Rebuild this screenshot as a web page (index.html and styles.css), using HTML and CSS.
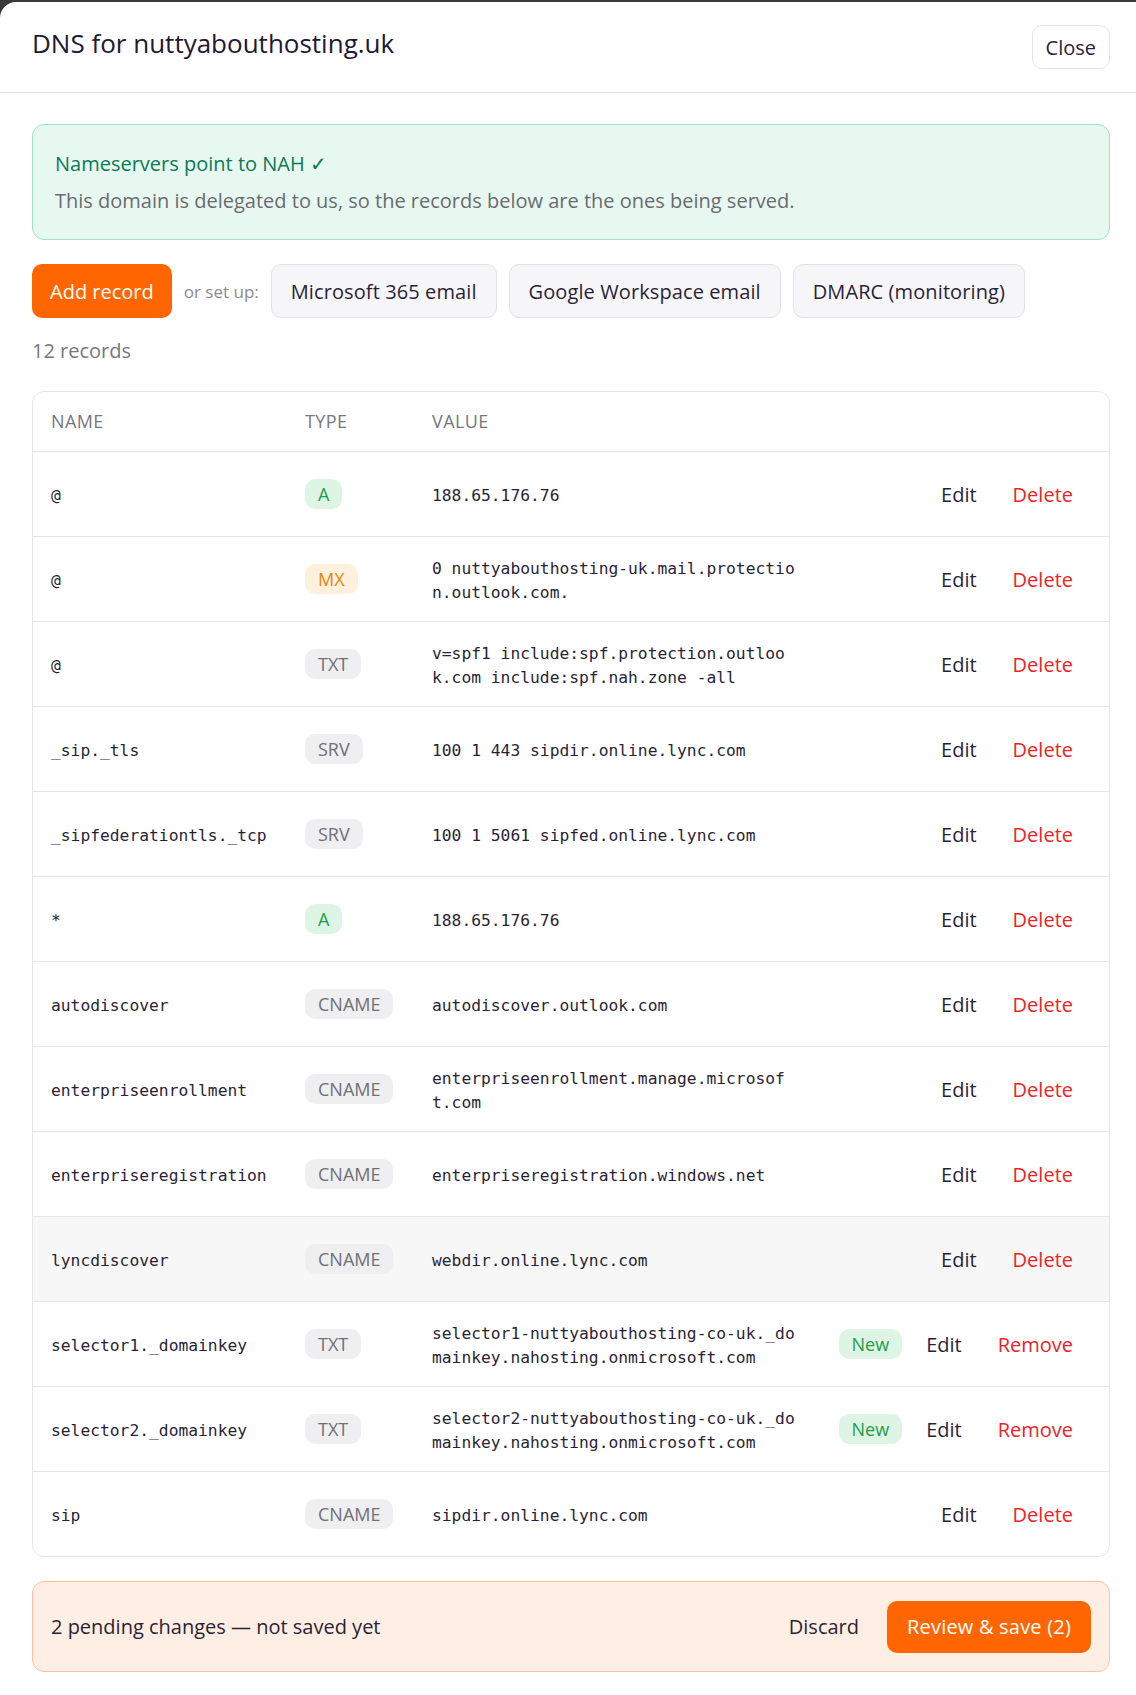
FILE: index.html
```html
<!DOCTYPE html>
<html lang="en">
<head>
  <meta charset="UTF-8">
  <meta name="viewport" content="width=device-width, initial-scale=1.0">
  <title>DNS for nuttyabouthosting.uk</title>
  <link rel="stylesheet" href="styles.css">
</head>
<body>

<div class="modal">
  <div class="modal-header">
    <h1 class="modal-title">DNS for nuttyabouthosting.uk</h1>
    <button class="btn-close">Close</button>
  </div>

  <div class="modal-body">
    <!-- Delegation status -->
    <div class="ns-banner">
      <p class="ns-title">Nameservers point to NAH ✓</p>
      <p class="ns-text">This domain is delegated to us, so the records below are the ones being served.</p>
    </div>

    <div class="toolbar">
      <button class="btn-primary">Add record</button>
      <span class="setup-label">or set up:</span>
      <button class="btn-preset">Microsoft 365 email</button>
      <button class="btn-preset">Google Workspace email</button>
      <button class="btn-preset">DMARC (monitoring)</button>
    </div>

    <p class="record-count">12 records</p>

    <!-- Records table -->
    <div class="records">
      <div class="row head">
        <span>Name</span>
        <span>Type</span>
        <span>Value</span>
        <span></span>
      </div>

      <div class="row">
        <span class="mono">@</span>
        <span><span class="badge badge-a">A</span></span>
        <span class="mono value">188.65.176.76</span>
        <span class="actions"><button class="link">Edit</button><button class="link danger">Delete</button></span>
      </div>
      <div class="row">
        <span class="mono">@</span>
        <span><span class="badge badge-mx">MX</span></span>
        <span class="mono value">0 nuttyabouthosting-uk.mail.protection.outlook.com.</span>
        <span class="actions"><button class="link">Edit</button><button class="link danger">Delete</button></span>
      </div>
      <div class="row">
        <span class="mono">@</span>
        <span><span class="badge">TXT</span></span>
        <span class="mono value">v=spf1 include:spf.protection.outlook.com include:spf.nah.zone -all</span>
        <span class="actions"><button class="link">Edit</button><button class="link danger">Delete</button></span>
      </div>
      <div class="row">
        <span class="mono">_sip._tls</span>
        <span><span class="badge">SRV</span></span>
        <span class="mono value">100 1 443 sipdir.online.lync.com</span>
        <span class="actions"><button class="link">Edit</button><button class="link danger">Delete</button></span>
      </div>
      <div class="row">
        <span class="mono">_sipfederationtls._tcp</span>
        <span><span class="badge">SRV</span></span>
        <span class="mono value">100 1 5061 sipfed.online.lync.com</span>
        <span class="actions"><button class="link">Edit</button><button class="link danger">Delete</button></span>
      </div>
      <div class="row">
        <span class="mono">*</span>
        <span><span class="badge badge-a">A</span></span>
        <span class="mono value">188.65.176.76</span>
        <span class="actions"><button class="link">Edit</button><button class="link danger">Delete</button></span>
      </div>
      <div class="row">
        <span class="mono">autodiscover</span>
        <span><span class="badge">CNAME</span></span>
        <span class="mono value">autodiscover.outlook.com</span>
        <span class="actions"><button class="link">Edit</button><button class="link danger">Delete</button></span>
      </div>
      <div class="row">
        <span class="mono">enterpriseenrollment</span>
        <span><span class="badge">CNAME</span></span>
        <span class="mono value">enterpriseenrollment.manage.microsoft.com</span>
        <span class="actions"><button class="link">Edit</button><button class="link danger">Delete</button></span>
      </div>
      <div class="row">
        <span class="mono">enterpriseregistration</span>
        <span><span class="badge">CNAME</span></span>
        <span class="mono value">enterpriseregistration.windows.net</span>
        <span class="actions"><button class="link">Edit</button><button class="link danger">Delete</button></span>
      </div>
      <div class="row hover">
        <span class="mono">lyncdiscover</span>
        <span><span class="badge">CNAME</span></span>
        <span class="mono value">webdir.online.lync.com</span>
        <span class="actions"><button class="link">Edit</button><button class="link danger">Delete</button></span>
      </div>
      <div class="row">
        <span class="mono">selector1._domainkey</span>
        <span><span class="badge">TXT</span></span>
        <span class="mono value">selector1-nuttyabouthosting-co-uk._domainkey.nahosting.onmicrosoft.com</span>
        <span class="actions"><span class="badge badge-new">New</span><button class="link">Edit</button><button class="link danger">Remove</button></span>
      </div>
      <div class="row">
        <span class="mono">selector2._domainkey</span>
        <span><span class="badge">TXT</span></span>
        <span class="mono value">selector2-nuttyabouthosting-co-uk._domainkey.nahosting.onmicrosoft.com</span>
        <span class="actions"><span class="badge badge-new">New</span><button class="link">Edit</button><button class="link danger">Remove</button></span>
      </div>
      <div class="row">
        <span class="mono">sip</span>
        <span><span class="badge">CNAME</span></span>
        <span class="mono value">sipdir.online.lync.com</span>
        <span class="actions"><button class="link">Edit</button><button class="link danger">Delete</button></span>
      </div>
    </div>

    <!-- Unsaved changes bar -->
    <div class="pending">
      <span class="pending-text">2 pending changes — not saved yet</span>
      <div class="pending-actions">
        <button class="link">Discard</button>
        <button class="btn-primary btn-save">Review &amp; save (2)</button>
      </div>
    </div>
  </div>
</div>

</body>
</html>
```

FILE: styles.css
```css
* {
  margin: 0;
  padding: 0;
  box-sizing: border-box;
}
body {
  font-family: 'Open Sans', 'Noto Sans', sans-serif;
  font-size: 20px;
  line-height: 27px;
  color: #2a1f36;
  background: #3a3a3a; /* backdrop behind the modal */
  padding-top: 2px;
}
button {
  font-family: inherit;
  font-size: inherit;
  line-height: inherit;
  color: inherit;
  border: none;
  background: none;
  cursor: pointer;
}
.modal {
  background: #ffffff;
  border-radius: 16px 0 0 0;
  min-height: 1693px;
}
/* Header */
.modal-header {
  display: flex;
  justify-content: space-between;
  align-items: center;
  height: 91px;
  padding: 0 26px 0 32px;
  border-bottom: 1px solid #e4e4e7;
}
.modal-title {
  font-size: 26px;
  line-height: 34px;
  font-weight: 500;
  color: #221833;
  margin-bottom: 8px;
}
.btn-close {
  height: 44px;
  padding: 0 13px;
  border: 1px solid #e4e4e7;
  border-radius: 10px;
  background: #ffffff;
}
.modal-body {
  padding: 31px 26px 23px 32px;
}
/* Nameserver status */
.ns-banner {
  background: #e7f8f1;
  border: 1px solid #9fe2c8;
  border-radius: 12px;
  padding: 25px 22px;
}
.ns-title {
  color: #0b7a56;
  font-weight: 500;
  margin-bottom: 10px;
}
.ns-text {
  color: #6b6b70;
}
/* Toolbar */
.toolbar {
  display: flex;
  align-items: center;
  gap: 12px;
  margin-top: 24px;
}
.btn-primary {
  height: 54px;
  padding: 0 18px;
  background: #ff6600;
  color: #ffffff;
  border-radius: 10px;
  font-weight: 500;
}
.setup-label {
  font-size: 17px;
  color: #8a8a8f;
}
.btn-preset {
  height: 54px;
  padding: 0 19px;
  background: #f6f6f8;
  border: 1px solid #e2e2e6;
  border-radius: 10px;
  letter-spacing: 0.1px;
}
.record-count {
  color: #77777c;
  margin: 19px 0 27px;
}
/* Records table */
.records {
  border: 1px solid #e6e6e8;
  border-radius: 12px;
  overflow: hidden;
}
.row {
  display: grid;
  grid-template-columns: 254px 127px 380px 1fr;
  align-items: center;
  height: 85px;
  padding: 0 24px 0 18px;
  border-top: 1px solid #e6e6e8;
}
.row.head {
  height: 59px;
  border-top: none;
  font-size: 18px;
  color: #77777c;
  text-transform: uppercase;
  letter-spacing: 0.4px;
}
.row.hover {
  background: #f7f7f7;
}
.mono {
  font-family: 'DejaVu Sans Mono', 'Liberation Mono', monospace;
  font-size: 16.3px;
  padding-top: 3px;
}
.value {
  max-width: 37ch;
  word-break: break-all;
  line-height: 1.45;
}
.badge {
  display: inline-block;
  padding: 2px 13px;
  line-height: 26px;
  border-radius: 10px;
  background: #efeff1;
  color: #707075;
  font-size: 18px;
}
.badge-a {
  background: #def5e6;
  color: #1e9e47;
}
.badge-mx {
  background: #fdf0dc;
  color: #e3860c;
}
.badge-new {
  background: #def5e6;
  color: #1e9e47;
}
.actions {
  display: flex;
  justify-content: flex-end;
  align-items: center;
  gap: 12px;
}
.link {
  padding: 8px 12px;
}
.link.danger {
  color: #ec2327;
}
/* Unsaved changes bar */
.pending {
  display: flex;
  justify-content: space-between;
  align-items: center;
  margin-top: 24px;
  height: 91px;
  padding: 0 18px;
  background: #ffeee3;
  border: 1px solid #ffc29c;
  border-radius: 12px;
}
.pending-actions {
  display: flex;
  align-items: center;
  gap: 16px;
}
.btn-save {
  height: 52px;
  padding: 0 20px;
  letter-spacing: 0.2px;
}
```
